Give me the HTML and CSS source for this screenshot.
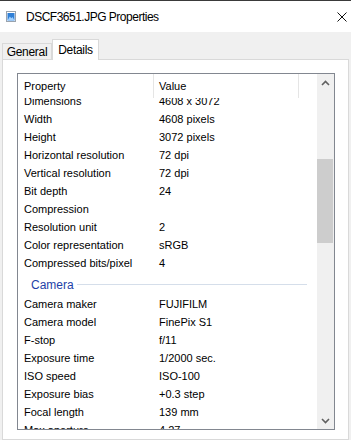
FILE: index.html
```html
<!DOCTYPE html>
<html lang="en">
<head>
  <meta charset="UTF-8">
  <meta name="viewport" content="width=device-width, initial-scale=1.0">
  <title>DSCF3651.JPG Properties</title>
  <link rel="stylesheet" href="styles.css">
</head>
<body>
  <div class="titlebar">
    <svg class="file-icon" width="10" height="11" viewBox="0 0 10 11">
      <rect x="0.5" y="0.5" width="9" height="10" fill="#fff" stroke="#9aa3ad"/>
      <rect x="1.5" y="2" width="7" height="7.5" fill="#2f7fd6"/>
      <path d="M1.5 9.5 L3.8 5.5 L5.3 7.2 L6.5 6 L8.5 9.5Z" fill="#9fd0ff"/>
    </svg>
    <span class="title">DSCF3651.JPG Properties</span>
    <svg class="close" width="10" height="10" viewBox="0 0 10 10">
      <path d="M0.5 0.5 L9.5 9.5 M9.5 0.5 L0.5 9.5" stroke="#111" stroke-width="1"/>
    </svg>
  </div>

  <div class="tabs">
    <div class="tab">General</div>
    <div class="tab active">Details</div>
  </div>

  <div class="panel">
    <div class="listbox">
      <div class="list">
        <div class="list-head">
          <div class="head-cell prop">Property</div>
          <div class="head-cell val">Value</div>
        </div>
        <div class="list-rows">
          <div class="rows-inner">
            <div class="row"><span>Dimensions</span><span>4608 x 3072</span></div>
            <div class="row"><span>Width</span><span>4608 pixels</span></div>
            <div class="row"><span>Height</span><span>3072 pixels</span></div>
            <div class="row"><span>Horizontal resolution</span><span>72 dpi</span></div>
            <div class="row"><span>Vertical resolution</span><span>72 dpi</span></div>
            <div class="row"><span>Bit depth</span><span>24</span></div>
            <div class="row"><span>Compression</span><span></span></div>
            <div class="row"><span>Resolution unit</span><span>2</span></div>
            <div class="row"><span>Color representation</span><span>sRGB</span></div>
            <div class="row"><span>Compressed bits/pixel</span><span>4</span></div>
            <div class="group">Camera</div>
            <div class="row"><span>Camera maker</span><span>FUJIFILM</span></div>
            <div class="row"><span>Camera model</span><span>FinePix S1</span></div>
            <div class="row"><span>F-stop</span><span>f/11</span></div>
            <div class="row"><span>Exposure time</span><span>1/2000 sec.</span></div>
            <div class="row"><span>ISO speed</span><span>ISO-100</span></div>
            <div class="row"><span>Exposure bias</span><span>+0.3 step</span></div>
            <div class="row"><span>Focal length</span><span>139 mm</span></div>
            <div class="row"><span>Max aperture</span><span>4.27</span></div>
          </div>
        </div>
      </div>
      <div class="scrollbar">
        <div class="arrow">
          <svg width="9" height="6" viewBox="0 0 9 6"><path d="M1 5 L4.5 1.5 L8 5" stroke="#606060" stroke-width="1.6" fill="none"/></svg>
        </div>
        <div class="thumb"></div>
        <div class="arrow bottom">
          <svg width="9" height="6" viewBox="0 0 9 6"><path d="M1 1 L4.5 4.5 L8 1" stroke="#606060" stroke-width="1.6" fill="none"/></svg>
        </div>
      </div>
    </div>
  </div>
</body>
</html>
```

FILE: styles.css
```css
* {
  box-sizing: border-box;
}

body {
  width: 351px;
  height: 440px;
  margin: 0;
  overflow: hidden;
  background-color: #f0f0f0;
  color: #000000;
  font-family: "Liberation Sans", Arial, sans-serif;
  font-size: 11px;
}

.titlebar {
  height: 32px;
  border-top: 1px solid #3a3a3a;
  background-color: #ffffff;
  display: flex;
  align-items: center;
  padding: 0 4px 0 6px;
}

.title {
  margin-left: 10px;
  font-size: 12px;
  letter-spacing: -0.5px;
}

.close {
  margin-left: auto;
}

.tabs {
  height: 27px;
  display: flex;
  align-items: flex-end;
  padding-left: 2px;
}

.tab {
  width: 50px;
  height: 16px;
  border: 1px solid #d9d9d9;
  border-bottom: none;
  display: flex;
  align-items: center;
  justify-content: center;
  font-size: 12px;
  letter-spacing: -0.3px;
}

.tab.active {
  width: 47px;
  height: 21px;
  margin-bottom: -1px;
  background-color: #ffffff;
  position: relative;
  z-index: 1;
}

.panel {
  height: 381px;
  margin: 0 2px;
  padding: 13px 0 0 14px;
  background-color: #ffffff;
  border: 1px solid #d9d9d9;
}

.listbox {
  width: 318px;
  height: 357px;
  border: 1px solid #828790;
  display: flex;
}

.list {
  width: 299px;
  display: flex;
  flex-direction: column;
}

.list-head {
  height: 24px;
  display: grid;
  grid-template-columns: 136px 145px;
  flex-shrink: 0;
}

.head-cell {
  display: flex;
  align-items: center;
  padding-bottom: 1px;
  border-right: 1px solid #e5e5e5;
}

.head-cell.prop {
  padding-left: 6px;
}

.head-cell.val {
  padding-left: 5px;
}

.list-rows {
  flex: 1;
  overflow: hidden;
}

.rows-inner {
  margin-top: -6px;
}

.row {
  height: 18px;
  display: grid;
  grid-template-columns: 136px 1fr;
  align-items: center;
  white-space: nowrap;
}

.row span:first-child {
  padding-left: 6px;
}

.row span:last-child {
  padding-left: 5px;
}

.group {
  height: 23px;
  display: flex;
  align-items: center;
  padding: 2px 10px 0 13px;
  color: #1e3fa8;
  font-size: 12px;
}

.group::after {
  content: "";
  flex: 1;
  height: 1px;
  margin-left: 3px;
  background-color: #d5deea;
}

.scrollbar {
  width: 17px;
  background-color: #f0f0f0;
  display: flex;
  flex-direction: column;
}

.arrow {
  height: 17px;
  display: flex;
  align-items: center;
  justify-content: center;
}

.arrow.bottom {
  margin-top: auto;
}

.thumb {
  width: 16px;
  height: 84px;
  margin-top: 68px;
  background-color: #cdcdcd;
}
```
